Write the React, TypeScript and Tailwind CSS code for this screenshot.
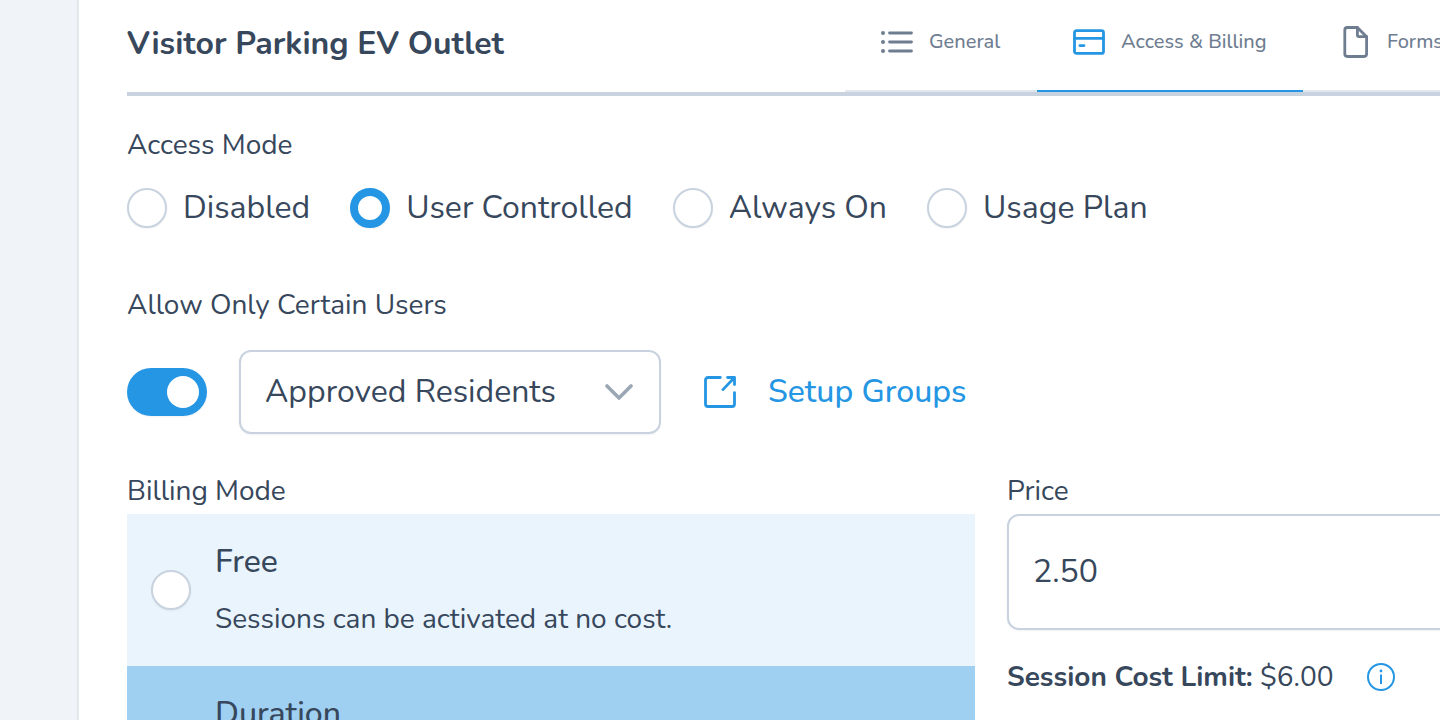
import { useState, type ReactNode } from "react";
import clsx from "clsx";

const accessModes = [
  { value: "disabled", label: "Disabled" },
  { value: "user", label: "User Controlled" },
  { value: "always", label: "Always On" },
  { value: "plan", label: "Usage Plan" },
];

const billingModes = [
  { value: "free", label: "Free", description: "Sessions can be activated at no cost." },
  { value: "duration", label: "Duration", description: "Sessions are billed by the hour." },
];

const labelClass = "text-[28px] leading-[42px]";

const radioClass =
  "size-10 shrink-0 appearance-none rounded-full border-2 border-[#c8d3df] bg-white shadow-xs checked:border-8 checked:border-[#2596e3]";

function Icon({ children, className }: { children: ReactNode; className?: string }) {
  return (
    <svg
      viewBox="0 0 32 32"
      fill="none"
      stroke="currentColor"
      strokeWidth="2.8"
      strokeLinecap="round"
      strokeLinejoin="round"
      aria-hidden="true"
      className={clsx("size-8 shrink-0", className)}
    >
      {children}
    </svg>
  );
}

function ListIcon() {
  return (
    <Icon>
      <path d="M8.5 7H30.5M8.5 16H30.5M8.5 25H30.5" />
      <g fill="currentColor" stroke="none">
        <circle cx="2" cy="7" r="2" />
        <circle cx="2" cy="16" r="2" />
        <circle cx="2" cy="25" r="2" />
      </g>
    </Icon>
  );
}

function CardIcon() {
  return (
    <Icon className="text-[#2596e3]">
      <rect x="1.5" y="4.6" width="29" height="22.8" rx="2" />
      <path d="M1.5 12.4H30.5M6.9 19.6H11" />
    </Icon>
  );
}

function FileIcon() {
  return (
    <Icon>
      <path d="M18.4 1.5H8.4A2.67 2.67 0 0 0 5.8 4.2V27.8A2.67 2.67 0 0 0 8.4 30.5H25A2.67 2.67 0 0 0 27.6 27.8V10.7Z" />
      <path d="M18.4 1.5V9.3A1.4 1.4 0 0 0 19.8 10.7H27.6" />
    </Icon>
  );
}

function ExternalIcon() {
  return (
    <Icon>
      <path d="M16.3 1.5H4A2.5 2.5 0 0 0 1.5 4V28A2.5 2.5 0 0 0 4 30.5H28A2.5 2.5 0 0 0 30.5 28V16.6" />
      <path d="M23.6 1.5H30.5V8.6M30.5 1.5L18.9 13.6" />
    </Icon>
  );
}

function Tab({
  label,
  icon,
  active,
  className,
  onClick,
}: {
  label: string;
  icon: ReactNode;
  active: boolean;
  className?: string;
  onClick: () => void;
}) {
  return (
    <button
      type="button"
      onClick={onClick}
      className={clsx(
        "flex items-center gap-4 border-b-2 px-9 pb-1.5 text-[20px] font-medium text-[#6f7d91]",
        active ? "border-[#2596e3]" : "border-[#e2e8ee]",
        className,
      )}
    >
      {icon}
      <span className="whitespace-nowrap">{label}</span>
    </button>
  );
}

export default function App() {
  const [tab, setTab] = useState("billing");
  const [access, setAccess] = useState("user");
  const [restricted, setRestricted] = useState(true);
  const [billing, setBilling] = useState("");
  const [price, setPrice] = useState("2.50");

  return (
    <div className="flex h-screen overflow-hidden bg-[#f0f4f9] pl-[77px] font-[Nunito,Lato,sans-serif] text-[#37475c]">
      {/* the card runs on past the right edge of the window */}
      <main className="-mr-[463px] h-max min-h-screen flex-1 border-l-2 border-[#e2e8ec] bg-white px-12 shadow-xs">
        <header className="flex h-24 border-b-4 border-[#c8d3df]">
          <h1 className="flex-1 self-center pb-1 text-[32px] leading-10 font-bold whitespace-nowrap">
            Visitor Parking EV Outlet
          </h1>
          <nav className="flex w-[1010px]">
            <Tab
              label="General"
              icon={<ListIcon />}
              active={tab === "general"}
              className="w-[192px]"
              onClick={() => setTab("general")}
            />
            <Tab
              label="Access & Billing"
              icon={<CardIcon />}
              active={tab === "billing"}
              className="w-[266px]"
              onClick={() => setTab("billing")}
            />
            <Tab
              label="Forms"
              icon={<FileIcon />}
              active={tab === "forms"}
              className="flex-1"
              onClick={() => setTab("forms")}
            />
          </nav>
        </header>

        <fieldset className="pt-7">
          <legend className={clsx("float-left w-full", labelClass)}>Access Mode</legend>
          <div className="clear-both flex gap-10 pt-[22px]">
            {accessModes.map((mode) => (
              <label
                key={mode.value}
                className="flex items-center gap-4 text-[32px] leading-10 whitespace-nowrap"
              >
                <input
                  type="radio"
                  name="access"
                  value={mode.value}
                  checked={access === mode.value}
                  onChange={() => setAccess(mode.value)}
                  className={radioClass}
                />
                {mode.label}
              </label>
            ))}
          </div>
        </fieldset>

        <section className="pt-14">
          <label htmlFor="restrict" className={clsx("block", labelClass)}>
            Allow Only Certain Users
          </label>
          <div className="mt-6 flex items-center">
            <input
              id="restrict"
              type="checkbox"
              role="switch"
              checked={restricted}
              onChange={(e) => setRestricted(e.target.checked)}
              className="flex h-12 w-20 appearance-none items-center rounded-full bg-[#c8d3df] px-2 shadow-xs before:size-8 before:rounded-full before:bg-white checked:justify-end checked:bg-[#2596e3]"
            />
            <div className="relative ml-8 w-[422px]">
              <select
                aria-label="User group"
                className="h-21 w-full appearance-none rounded-xl border-2 border-[#c8d3df] bg-white px-6 text-[32px] shadow-xs"
              >
                <option>Approved Residents</option>
                <option>Visitors</option>
              </select>
              <svg
                viewBox="0 0 28 16"
                fill="none"
                stroke="currentColor"
                strokeWidth="3.6"
                strokeLinecap="round"
                strokeLinejoin="round"
                aria-hidden="true"
                className="pointer-events-none absolute top-[34px] right-7 h-4 w-7 text-[#9ca7b5]"
              >
                <path d="M2 2L14 14L26 2" />
              </svg>
            </div>
            <a href="#groups" className="ml-[43px] flex items-center gap-8 text-[32px] font-medium text-[#2596e3]">
              <ExternalIcon />
              Setup Groups
            </a>
          </div>
        </section>

        <div className="grid grid-cols-2 gap-8 pt-9">
          <fieldset>
            <legend className={clsx("float-left w-full", labelClass)}>Billing Mode</legend>
            <div className="clear-both pt-0.5">
              {billingModes.map((mode, i) => (
                <label
                  key={mode.value}
                  className={clsx("flex h-[152px] items-center gap-6 px-6", i % 2 ? "bg-[#9fcff1]" : "bg-[#e9f4fd]")}
                >
                  <input
                    type="radio"
                    name="billing"
                    value={mode.value}
                    checked={billing === mode.value}
                    onChange={() => setBilling(mode.value)}
                    className={radioClass}
                  />
                  <span className="flex flex-col gap-4 pt-0.5">
                    <span className="text-[32px] leading-10 font-medium">{mode.label}</span>
                    <span className={labelClass}>{mode.description}</span>
                  </span>
                </label>
              ))}
            </div>
          </fieldset>

          <div>
            <label htmlFor="price" className={clsx("block", labelClass)}>
              Price
            </label>
            <input
              id="price"
              value={price}
              onChange={(e) => setPrice(e.target.value)}
              className="mt-0.5 block h-29 w-full rounded-xl border-2 border-[#c8d3df] bg-white px-6 pb-0.5 text-[32px] shadow-xs"
            />
            <div className={clsx("mt-[26px] flex items-center", labelClass)}>
              <p className="w-[360px] whitespace-nowrap">
                <strong className="font-bold">Session Cost Limit:</strong> $6.00
              </p>
              <button type="button" aria-label="About the session cost limit" className="text-[#2596e3]">
                <svg viewBox="0 0 28 28" fill="none" stroke="currentColor" className="size-7">
                  <circle cx="14" cy="14" r="13" strokeWidth="2" />
                  <path d="M14 11.5V21" strokeWidth="2" />
                  <circle cx="14" cy="8" r="1.4" fill="currentColor" stroke="none" />
                </svg>
              </button>
            </div>
          </div>
        </div>
      </main>
    </div>
  );
}
